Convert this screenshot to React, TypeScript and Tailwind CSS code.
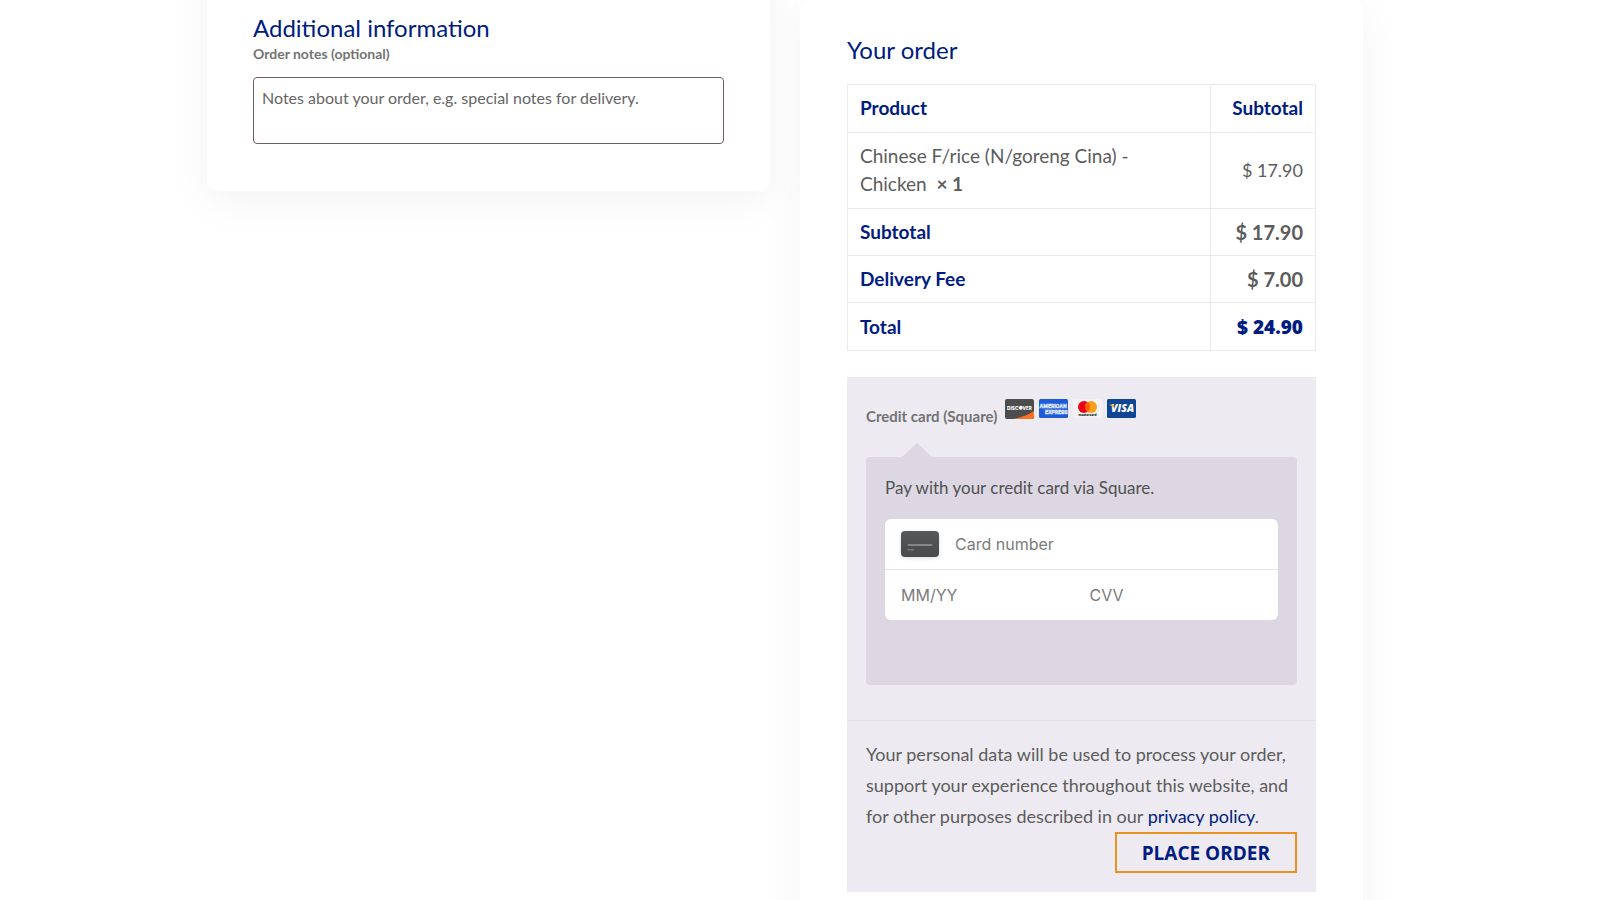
import type { ReactNode } from "react";

const cellBase = "border border-[#ebebeb] px-3 pt-[9px] leading-7";
const cell = `${cellBase} pb-[10px]`;
const summaryCell = `${cellBase} pb-[9px]`;

function DiscoverLogo() {
  return (
    <svg role="img" aria-label="Discover" viewBox="0 0 58 40" className="h-5 w-[29px]">
      <rect width="58" height="40" rx="4" fill="#4d4d4d" />
      <path d="M58 24 C46 32 32 37 16 40 H54 a4 4 0 0 0 4-4 Z" fill="#fd7020" />
      <text x="4" y="21" fontFamily="Inter, sans-serif" fontWeight="800" fontSize="9.6" fill="#fff">DISC</text>
      <circle cx="31.5" cy="17.5" r="4" fill="#fff" />
      <text x="35" y="21" fontFamily="Inter, sans-serif" fontWeight="800" fontSize="9" fill="#fff">VER</text>
    </svg>
  );
}

function AmexLogo() {
  return (
    <svg role="img" aria-label="American Express" viewBox="0 0 58 38" className="h-[19px] w-[29px]">
      <rect width="58" height="38" rx="3" fill="#1f5bd8" />
      <g fontFamily="Inter, sans-serif" fontWeight="700" fill="#1f5bd8" stroke="#dbe6fb" strokeWidth="1.2">
        <text x="1" y="17" fontSize="10">AMERICAN</text>
        <text x="12" y="30" fontSize="9.8">EXPRESS</text>
      </g>
    </svg>
  );
}

function MastercardLogo() {
  return (
    <svg role="img" aria-label="Mastercard" viewBox="0 0 58 38" className="h-[19px] w-[29px]">
      <rect width="58" height="38" rx="3" fill="#f3f2f3" />
      <circle cx="22" cy="16" r="12" fill="#eb001b" />
      <circle cx="36" cy="16" r="12" fill="#f79e1b" />
      <path d="M29 6.2 a12 12 0 0 1 0 19.6 a12 12 0 0 1 0-19.6Z" fill="#ff5f00" />
      <text x="29" y="34" textAnchor="middle" fontFamily="Inter, sans-serif" fontWeight="800" fontSize="6.4" fill="#222">mastercard</text>
    </svg>
  );
}

function VisaLogo() {
  return (
    <svg role="img" aria-label="Visa" viewBox="0 0 58 38" className="h-[19px] w-[29px]">
      <rect width="58" height="38" rx="3" fill="#0e4595" />
      <text x="31" y="26" textAnchor="middle" fontFamily="Open Sans, sans-serif" fontStyle="italic" fontWeight="800" fontSize="21" fill="#fff">VISA</text>
      <path d="M5 11 h6 q2 0 2.5 2 l1.5 6 q-3-5-10-7.2Z" fill="#f2ae14" />
    </svg>
  );
}

function BlankCardIcon() {
  return (
    <svg aria-hidden="true" viewBox="0 0 38 26" className="h-[26px] w-[38px] shrink-0 drop-shadow-sm">
      <defs>
        <linearGradient id="blank-card" x1="0" y1="0" x2="0" y2="1">
          <stop offset="0" stopColor="#56585a" />
          <stop offset="1" stopColor="#47494b" />
        </linearGradient>
      </defs>
      <rect width="38" height="26" rx="4" fill="url(#blank-card)" />
      <rect x="6.5" y="13" width="25" height="2" rx="1" fill="#838587" />
      <rect x="6.5" y="18" width="7" height="1.6" rx="0.8" fill="#77797b" />
    </svg>
  );
}

function SummaryRow({ label, children }: { label: string; children: ReactNode }) {
  return (
    <tr>
      <th scope="row" className={`${summaryCell} text-left font-bold text-[#001c80]`}>{label}</th>
      <td className={`${summaryCell} text-right text-[20px] font-bold`}>{children}</td>
    </tr>
  );
}

export default function App() {
  return (
    <div className="min-h-screen overflow-hidden bg-white pr-[30px] font-['Lato','Liberation_Sans',sans-serif] text-[#5c5c5c]">
      <form className="mx-auto grid max-w-[1156px] grid-cols-2 items-start gap-[30px]" onSubmit={(e) => e.preventDefault()}>
        <section className="-mt-12 rounded-[10px] bg-white px-[46px] pt-[60px] pb-[47px] shadow-[0_10px_40px_rgba(0,0,0,0.05)]">
          <h2 className="text-[24px] leading-8 text-[#001c80]">Additional information</h2>
          <label htmlFor="order-notes" className="block text-[14px] leading-5 font-bold text-[#737373]">
            Order notes (optional)
          </label>
          <textarea
            id="order-notes"
            placeholder="Notes about your order, e.g. special notes for delivery."
            className="mt-[13px] block h-[67px] w-full resize-none rounded border border-[#6b5f65] px-2 py-2 text-[16px] leading-6 outline-none placeholder:text-[#666]"
          />
        </section>

        <section className="relative rounded-[10px] bg-white px-[47px] pt-[34px] pb-[46px] shadow-[0_10px_40px_rgba(0,0,0,0.05)]">
          <h2 className="text-[24px] leading-8 text-[#001c80]">Your order</h2>

          <table className="mt-[18px] w-full border-collapse text-[19px]">
            <thead>
              <tr>
                <th scope="col" className={`${cell} text-left font-bold text-[#001c80]`}>Product</th>
                <th scope="col" className={`${cell} w-[105px] text-right font-bold text-[#001c80]`}>Subtotal</th>
              </tr>
            </thead>
            <tbody>
              <tr>
                <td className={cell}>
                  Chinese F/rice (N/goreng Cina) -<br />
                  Chicken&nbsp; <strong>× 1</strong>
                </td>
                <td className={`${cell} text-right text-[18px]`}>$ 17.90</td>
              </tr>
              <SummaryRow label="Subtotal">$ 17.90</SummaryRow>
              <SummaryRow label="Delivery Fee">$ 7.00</SummaryRow>
              <SummaryRow label="Total">
                <span className="font-['Open_Sans',sans-serif] text-[19px] font-extrabold text-[#001c80]">$ 24.90</span>
              </SummaryRow>
            </tbody>
          </table>

          <div className="mt-[26px] bg-[#edebf1]">
            <div className="px-[19px] pt-[22px] pb-[35px]">
              <div className="flex items-start gap-2">
                <span className="mt-[7px] text-[15px] leading-5 font-bold text-[#737373]">Credit card (Square)</span>
                <span className="flex items-start gap-[5px]">
                  <DiscoverLogo />
                  <AmexLogo />
                  <MastercardLogo />
                  <VisaLogo />
                </span>
              </div>

              <div className="mt-[17px] ml-9">
                <svg aria-hidden="true" viewBox="0 0 30 14" className="block h-[14px] w-[30px]">
                  <path d="M0 14 15 0 30 14Z" fill="#dcd7e3" />
                </svg>
              </div>
              <div className="rounded-sm bg-[#dcd7e3] px-[19px] pt-[19px] pb-[65px]">
                <p className="text-[17px] leading-6 text-[#515151]">Pay with your credit card via Square.</p>
                <div className="mt-[19px] rounded-md bg-white font-['Inter',sans-serif] text-[16px]">
                  <div className="flex h-[50px] items-center gap-4 px-4">
                    <BlankCardIcon />
                    <input
                      aria-label="Card number"
                      placeholder="Card number"
                      className="min-w-0 flex-1 outline-none placeholder:text-[#7b7b7b]"
                    />
                  </div>
                  <div className="grid h-[51px] grid-cols-2 items-center border-t border-[#e3e3e3]">
                    <input
                      aria-label="Expiration date"
                      placeholder="MM/YY"
                      className="min-w-0 pl-4 outline-none placeholder:text-[#7b7b7b]"
                    />
                    <input
                      aria-label="CVV"
                      placeholder="CVV"
                      className="min-w-0 pl-2 outline-none placeholder:text-[#7b7b7b]"
                    />
                  </div>
                </div>
              </div>
            </div>

            <div className="border-t border-[#e1dee6] px-[19px] pt-[18px] pb-[19px]">
              <p className="text-[18px] leading-[31px]">
                Your personal data will be used to process your order, support your experience throughout this website,
                and for other purposes described in our{" "}
                <a href="#privacy-policy" className="text-[#001c80]">privacy policy</a>.
              </p>
              <div className="flex justify-end">
                <button
                  type="submit"
                  className="h-[41px] border-2 border-[#e9921f] px-[25px] font-['Open_Sans',sans-serif] text-[19px] leading-6 font-bold whitespace-nowrap text-[#001c80]"
                >
                  PLACE ORDER
                </button>
              </div>
            </div>
          </div>
        </section>
      </form>
    </div>
  );
}
